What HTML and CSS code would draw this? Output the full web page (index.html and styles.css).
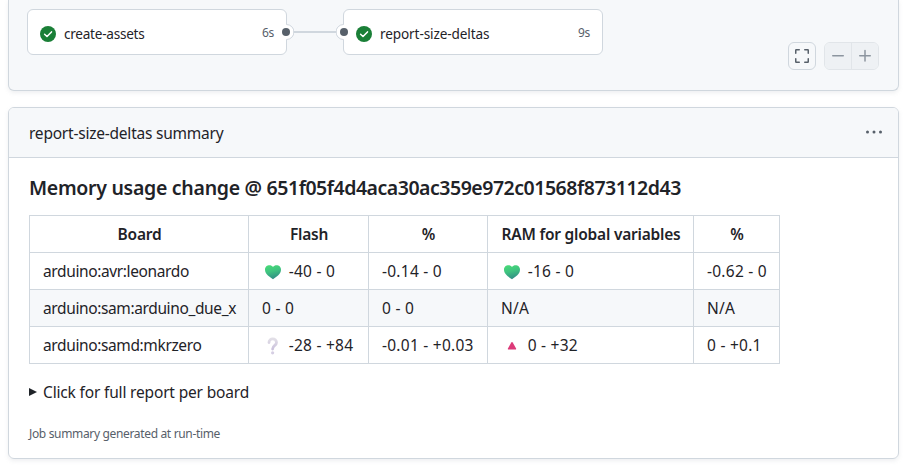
FILE: index.html
```
<!DOCTYPE html>
<html lang="en">
<head>
<meta charset="utf-8">
<title>report-size-deltas summary</title>
<link rel="stylesheet" href="styles.css">
</head>
<body>
<section class="graph">
  <div class="jobs">
    <div class="job">
      <svg class="status" viewBox="0 0 16 16"><circle cx="8" cy="8" r="8" fill="#1a7f37"/><path d="M4.6 8.2 7 10.5 11.5 5.9" fill="none" stroke="#fff" stroke-width="1.5" stroke-linecap="round" stroke-linejoin="round"/></svg>
      <span class="job-name create">create-assets</span><span class="time">6s</span>
      <svg class="port port-out" viewBox="0 0 16 16"><circle cx="8" cy="8" r="7.5" fill="#fff"/><path d="M8.5.5a7.5 7.5 0 0 1 0 15" fill="none" stroke="#d0d7de"/><circle cx="8" cy="8" r="4" fill="#57606a"/></svg>
    </div>
    <div class="connector"></div>
    <div class="job">
      <svg class="port port-in" viewBox="0 0 16 16"><circle cx="8" cy="8" r="7.5" fill="#fff"/><path d="M7.5.5a7.5 7.5 0 0 0 0 15" fill="none" stroke="#d0d7de"/><circle cx="8" cy="8" r="4" fill="#57606a"/></svg>
      <svg class="status" viewBox="0 0 16 16"><circle cx="8" cy="8" r="8" fill="#1a7f37"/><path d="M4.6 8.2 7 10.5 11.5 5.9" fill="none" stroke="#fff" stroke-width="1.5" stroke-linecap="round" stroke-linejoin="round"/></svg>
      <span class="job-name deltas">report-size-deltas</span><span class="time">9s</span>
    </div>
  </div>
  <div class="controls">
    <button class="fit" aria-label="Fit"><svg width="16" height="16" viewBox="0 0 16 16"><path d="M1.75 5.25v-3a.5.5 0 0 1 .5-.5h3M10.75 1.75h3a.5.5 0 0 1 .5.5v3M14.25 10.75v3a.5.5 0 0 1-.5.5h-3M5.25 14.25h-3a.5.5 0 0 1-.5-.5v-3" fill="none" stroke="#57606a" stroke-width="1.5" stroke-linecap="round"/></svg></button>
    <div class="zoom">
      <button aria-label="Zoom out"><svg width="16" height="16" viewBox="0 0 16 16"><path d="M2.75 7.75h10.5" stroke="#8c959f" stroke-width="1.5" stroke-linecap="round"/></svg></button>
      <button aria-label="Zoom in"><svg width="16" height="16" viewBox="0 0 16 16"><path d="M2.75 7.75h10.5M8 2.5V13" stroke="#8c959f" stroke-width="1.5" stroke-linecap="round"/></svg></button>
    </div>
  </div>
</section>
<section class="summary">
  <header><span class="title">report-size-deltas summary</span>
    <svg width="18" height="16" viewBox="0 0 18 16" fill="#57606a"><circle cx="2.5" cy="7" r="1.5"/><circle cx="9" cy="7" r="1.5"/><circle cx="15.5" cy="7" r="1.5"/></svg>
  </header>
  <div class="body">
    <h3><span>Memory usage change @ </span><span class="hash">651f05f4d4aca30ac359e972c01568f873112d43</span></h3>
    <table>
      <colgroup><col class="c1"><col class="c2"><col class="c3"><col class="c4"><col class="c5"></colgroup>
      <tr><th>Board</th><th>Flash</th><th>%</th><th class="ram">RAM for global variables</th><th>%</th></tr>
      <tr><td class="board">arduino:avr:leonardo</td>
        <td><svg class="emoji" viewBox="0 0 20 20"><defs><linearGradient id="g" x1="0" y1="0" x2=".3" y2="1"><stop offset="0" stop-color="#48dc76"/><stop offset=".5" stop-color="#3fc380"/><stop offset="1" stop-color="#329184"/></linearGradient></defs><path d="M10 5C8.200 2.400 2 2.600 2 7.800 2 12 6.500 15 10 17.200 13.500 15 18 12 18 7.800 18 2.600 11.800 2.400 10 5Z" fill="url(#g)"/></svg>-40 - 0</td>
        <td>-0.14 - 0</td>
        <td><svg class="emoji" viewBox="0 0 20 20"><path d="M10 5C8.200 2.400 2 2.600 2 7.800 2 12 6.500 15 10 17.200 13.500 15 18 12 18 7.800 18 2.600 11.800 2.400 10 5Z" fill="url(#g)"/></svg>-16 - 0</td>
        <td>-0.62 - 0</td></tr>
      <tr><td class="board">arduino:sam:arduino_due_x</td><td>0 - 0</td><td>0 - 0</td><td>N/A</td><td>N/A</td></tr>
      <tr><td class="board">arduino:samd:mkrzero</td>
        <td><svg class="emoji" viewBox="0 0 20 20"><defs><linearGradient id="q" x1="0" y1="0" x2="0" y2="1"><stop offset="0" stop-color="#e2dfe7"/><stop offset="1" stop-color="#cbc2dc"/></linearGradient></defs><path d="M6 6.500C6 1.500 13.500 2 13.500 6.500 13.500 9.500 9.600 9.200 9.600 13" fill="none" stroke="url(#q)" stroke-width="2.800" stroke-linecap="round"/><circle cx="9.600" cy="16.800" r="1.600" fill="#d5cee3"/></svg>-28 - +84</td>
        <td>-0.01 - +0.03</td>
        <td><svg class="emoji" viewBox="0 0 20 20"><path d="M9.300 6.500q.7-.8 1.400 0l3.400 6q.3 1-.7 1H6.600q-1 0-.7-1Z" fill="#dc3978"/></svg>0 - +32</td>
        <td>0 - +0.1</td></tr>
    </table>
    <div class="details"><svg width="8" height="8" viewBox="0 0 8 8"><path d="M0 0 8 4 0 8Z" fill="#1f2328"/></svg><span class="click">Click for full report per board</span></div>
    <p class="note">Job summary generated at run-time</p>
  </div>
</section>
</body>
</html>
```
FILE: styles.css
```
* { box-sizing: border-box; }
body { margin: 0; padding: 0 6px 0 8px; height: 466px; overflow: hidden; background: #fff; color: #1f2328; font: 15.5px/24px "Noto Sans", sans-serif; }
svg { display: block; flex: none; }
.graph { height: 91px; border: 1px solid #d0d7de; border-top: 0; border-radius: 0 0 6px 6px; background: #f6f8fa; box-shadow: 0 2px 4px rgba(140,149,159,.15); display: flex; justify-content: space-between; padding: 9px 19px 0 18px; }
.jobs { display: flex; align-items: flex-start; }
.job { position: relative; width: 260px; height: 46px; display: flex; align-items: center; padding: 3px 12px 0; border: 1px solid #d0d7de; border-radius: 6px; background: #fff; }
.status { width: 16px; height: 16px; margin-right: 8px; }
.job-name { font-size: 13.6px; flex: 1; white-space: nowrap; }
.create { letter-spacing: -.26px; }
.deltas { letter-spacing: -.12px; }
.time { font-size: 12px; line-height: 18px; padding-bottom: 2px; letter-spacing: -.3px; color: #57606a; }
.port { position: absolute; width: 16px; height: 16px; top: 14px; }
.port-out { right: -8px; }
.port-in { left: -8px; }
.connector { width: 56px; height: 2px; margin-top: 22px; background: #d0d7de; }
.controls { display: flex; gap: 8px; margin-top: 33px; }
button { border: 0; padding: 0; width: 27px; height: 26px; background: #eef1f4; display: flex; align-items: center; justify-content: center; }
.fit { width: 28px; height: 28px; border: 1px solid #d0d7de; border-radius: 6px; background: #f6f8fa; }
.zoom { height: 28px; width: 55px; display: flex; border: 1px solid #e1e5e9; border-radius: 6px; overflow: hidden; }
.zoom button + button { border-left: 1px solid #e1e5e9; }
.summary { margin-top: 16px; height: 352px; border: 1px solid #d0d7de; border-radius: 6px; overflow: hidden; box-shadow: 0 2px 4px rgba(140,149,159,.15); }
header { display: flex; justify-content: space-between; align-items: center; height: 50px; padding: 1px 15px 0 20px; background: #f6f8fa; border-bottom: 1px solid #d0d7de; }
.title { letter-spacing: -.22px; }
.body { padding: 17px 20px 0; }
h3 { margin: 0 0 15px; font-size: 19.5px; line-height: 25px; font-weight: 600; white-space: nowrap; letter-spacing: -.29px; }
.hash { letter-spacing: -.48px; }
table { border-collapse: collapse; table-layout: fixed; width: 751px; }
.c1 { width: 219px; } .c2 { width: 120px; } .c3 { width: 119px; } .c4 { width: 206px; } .c5 { width: 86px; }
th, td { border: 1px solid #d0d7de; height: 37px; padding: 0 12px 0 13px; white-space: nowrap; }
th { font-weight: 600; letter-spacing: -.22px; }
td { letter-spacing: .25px; }
.board { letter-spacing: -.38px; }
tr:nth-child(3) { background: #f6f8fa; }
.emoji { display: inline-block; width: 20px; height: 20px; margin: 0 6px 0 .7px; vertical-align: -5px; }
.details { display: flex; align-items: center; gap: 6px; margin-top: 16px; }
.click { letter-spacing: -.17px; }
.note { margin: 21px 0 0; font-size: 12px; line-height: 18px; letter-spacing: -.34px; color: #57606a; }
```
